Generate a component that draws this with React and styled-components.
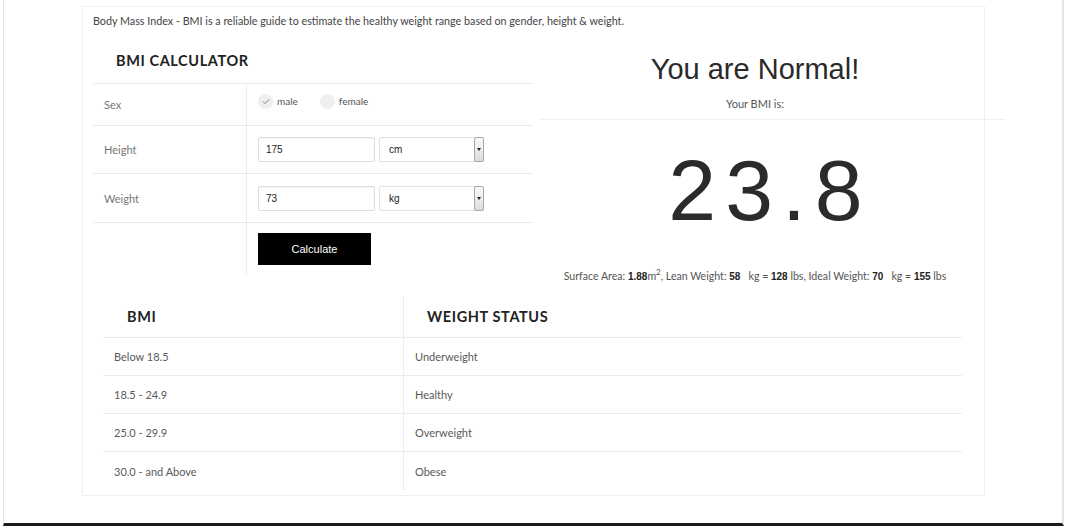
import styled, { createGlobalStyle } from "styled-components";

const GlobalStyle = createGlobalStyle`
  html, body {
    margin: 0;
    padding: 0;
    background: #fff;
    font-family: Lato, "Open Sans", sans-serif;
    color: #444;
  }
  * { box-sizing: border-box; }
`;

const Page = styled.div`
  margin-left: 3px;
  width: 1061px;
  height: 526px;
  border-left: 1px solid #e4e4e4;
  border-right: 2px solid #e6e6e6;
  border-bottom: 3px solid #1c1c1c;
  padding-top: 6px;
  padding-left: 78px;
`;

const Card = styled.div`
  width: 903px;
  height: 490px;
  border: 1px solid #f0f0f0;
  padding: 6px 7px 0 10px;
`;

const Intro = styled.p`
  margin: 0;
  font-size: 10.75px;
  line-height: 16px;
  color: #444;
`;

const TopRow = styled.div`
  display: flex;
  align-items: flex-start;
  height: 246px;
`;

const FormSide = styled.div`
  width: 440px;
`;

const Title = styled.h2`
  margin: 0;
  padding: 22px 0 12px 23px;
  font-size: 14.5px;
  line-height: 20px;
  font-weight: 700;
  letter-spacing: 0.6px;
  color: #222;
`;

const FormRow = styled.div`
  display: grid;
  grid-template-columns: 154px 1fr;
  height: ${(p) => p.h}px;
  border-top: 1px solid #e9e9e9;
`;

const Label = styled.div`
  display: flex;
  align-items: center;
  padding-left: 11px;
  font-size: 11px;
  color: #777;
  border-right: 1px solid #eeeeee;
`;

const Field = styled.div`
  display: flex;
  align-items: ${(p) => (p.top ? "flex-start" : "center")};
  padding-left: 11px;
  padding-top: ${(p) => (p.top ? "10px" : "0")};
  gap: 4px;
`;

const RadioGroup = styled.div`
  display: flex;
  align-items: center;
  margin-top: -7px;
`;

const RadioDot = styled.span`
  width: 15px;
  height: 15px;
  border-radius: 50%;
  background: #efefef;
  display: inline-flex;
  align-items: center;
  justify-content: center;
  margin-right: 4px;
`;

const RadioText = styled.span`
  font-size: 10px;
  color: #555;
  margin-right: ${(p) => p.gap || 0}px;
`;

const TextInput = styled.div`
  width: 117px;
  height: 25px;
  border: 1px solid #dcdcdc;
  border-radius: 2px;
  padding-left: 7px;
  display: flex;
  align-items: center;
  font-family: "Liberation Sans", Arial, sans-serif;
  font-size: 10px;
  color: #222;
  box-shadow: inset 0 1px 1px rgba(0, 0, 0, 0.04);
`;

const SelectBox = styled.div`
  position: relative;
  width: 105px;
  height: 25px;
  border: 1px solid #e2e2e2;
  border-radius: 2px;
  padding-left: 9px;
  display: flex;
  align-items: center;
  font-family: "Liberation Sans", Arial, sans-serif;
  font-size: 10px;
  color: #222;
`;

const SelectArrow = styled.span`
  position: absolute;
  right: -1px;
  top: -1px;
  width: 10px;
  height: 25px;
  border: 1px solid #a9a9a9;
  border-radius: 2px;
  background: linear-gradient(#fafafa, #dcdcdc);
  display: flex;
  align-items: center;
  justify-content: center;
  &::after {
    content: "";
    border-left: 2px solid transparent;
    border-right: 2px solid transparent;
    border-top: 3px solid #222;
  }
`;

const Button = styled.button`
  width: 113px;
  height: 32px;
  border: 0;
  border-radius: 0;
  background: #000;
  color: #fff;
  font-family: "Liberation Sans", Arial, sans-serif;
  font-size: 11px;
  cursor: pointer;
`;

const ResultSide = styled.div`
  flex: 1;
  display: flex;
  flex-direction: column;
  align-items: center;
`;

const Verdict = styled.h1`
  margin: 22px 0 0;
  font-family: "Liberation Sans", Arial, sans-serif;
  font-weight: 400;
  font-size: 29px;
  line-height: 36px;
  color: #2a2a2a;
`;

const Sub = styled.div`
  margin-top: 9px;
  font-size: 11px;
  line-height: 16px;
  color: #555;
`;

const Rule = styled.div`
  align-self: stretch;
  margin: 7px -28px 0 7px;
  border-top: 1px solid #f0f0f0;
`;

const Score = styled.div`
  margin-top: 20px;
  padding-left: 30px;
  font-family: "Liberation Sans", Arial, sans-serif;
  font-size: 86px;
  line-height: 100px;
  letter-spacing: 9px;
  color: #2b2b2b;
`;

const Stats = styled.div`
  margin-top: 28px;
  font-size: 10.6px;
  line-height: 16px;
  color: #555;
  white-space: pre;
  b {
    font-family: "Liberation Sans", Arial, sans-serif;
    font-size: 10px;
    color: #222;
  }
  sup {
    font-size: 8px;
    line-height: 0;
  }
`;

const RangeTable = styled.div`
  margin: 21px 0 0 10px;
  width: 859px;
  display: grid;
  grid-template-columns: 301px 1fr;
`;

const Cell = styled.div`
  height: ${(p) => (p.head ? 42 : 38)}px;
  display: flex;
  align-items: center;
  padding-left: ${(p) => (p.head ? (p.first ? 24 : 23) : 11)}px;
  border-bottom: ${(p) => (p.last ? "0" : "1px solid #ececec")};
  border-right: ${(p) => (p.first ? "1px solid #eeeeee" : "0")};
  font-size: ${(p) => (p.head ? 14.5 : 11)}px;
  font-weight: ${(p) => (p.head ? 700 : 400)};
  letter-spacing: ${(p) => (p.head ? "0.6px" : "0")};
  color: ${(p) => (p.head ? "#222" : "#5a5a5a")};
`;

const ranges = [
  ["Below 18.5", "Underweight"],
  ["18.5 - 24.9", "Healthy"],
  ["25.0 - 29.9", "Overweight"],
  ["30.0 - and Above", "Obese"],
];

function Check() {
  return (
    <svg width="8" height="7" viewBox="0 0 8 7">
      <path d="M1 3.6 L3 5.6 L7 1.2" fill="none" stroke="#777" strokeWidth="0.9" />
    </svg>
  );
}

export default function App() {
  return (
    <>
      <GlobalStyle />
      <Page>
        <Card>
          <Intro>
            Body Mass Index - BMI is a reliable guide to estimate the healthy weight range based on gender, height &amp; weight.
          </Intro>
          <TopRow>
            <FormSide>
              <Title>BMI CALCULATOR</Title>
              <FormRow h={42}>
                <Label>Sex</Label>
                <Field>
                  <RadioGroup>
                    <RadioDot>
                      <Check />
                    </RadioDot>
                    <RadioText gap={22}>male</RadioText>
                    <RadioDot />
                    <RadioText>female</RadioText>
                  </RadioGroup>
                </Field>
              </FormRow>
              <FormRow h={48}>
                <Label>Height</Label>
                <Field>
                  <TextInput>175</TextInput>
                  <SelectBox>
                    cm
                    <SelectArrow />
                  </SelectBox>
                </Field>
              </FormRow>
              <FormRow h={49}>
                <Label>Weight</Label>
                <Field>
                  <TextInput>73</TextInput>
                  <SelectBox>
                    kg
                    <SelectArrow />
                  </SelectBox>
                </Field>
              </FormRow>
              <FormRow h={53}>
                <Label />
                <Field top>
                  <Button>Calculate</Button>
                </Field>
              </FormRow>
            </FormSide>
            <ResultSide>
              <Verdict>You are Normal!</Verdict>
              <Sub>Your BMI is:</Sub>
              <Rule />
              <Score>23.8</Score>
              <Stats>
                Surface Area: <b>1.88</b>m<sup>2</sup>, Lean Weight: <b>58</b>   kg = <b>128</b> lbs, Ideal Weight: <b>70</b>   kg = <b>155</b> lbs
              </Stats>
            </ResultSide>
          </TopRow>
          <RangeTable>
            <Cell head first>BMI</Cell>
            <Cell head>WEIGHT STATUS</Cell>
            {ranges.map(([bmi, status], i) => (
              <>
                <Cell key={bmi} first last={i === ranges.length - 1}>
                  {bmi}
                </Cell>
                <Cell key={status} last={i === ranges.length - 1}>
                  {status}
                </Cell>
              </>
            ))}
          </RangeTable>
        </Card>
      </Page>
    </>
  );
}
